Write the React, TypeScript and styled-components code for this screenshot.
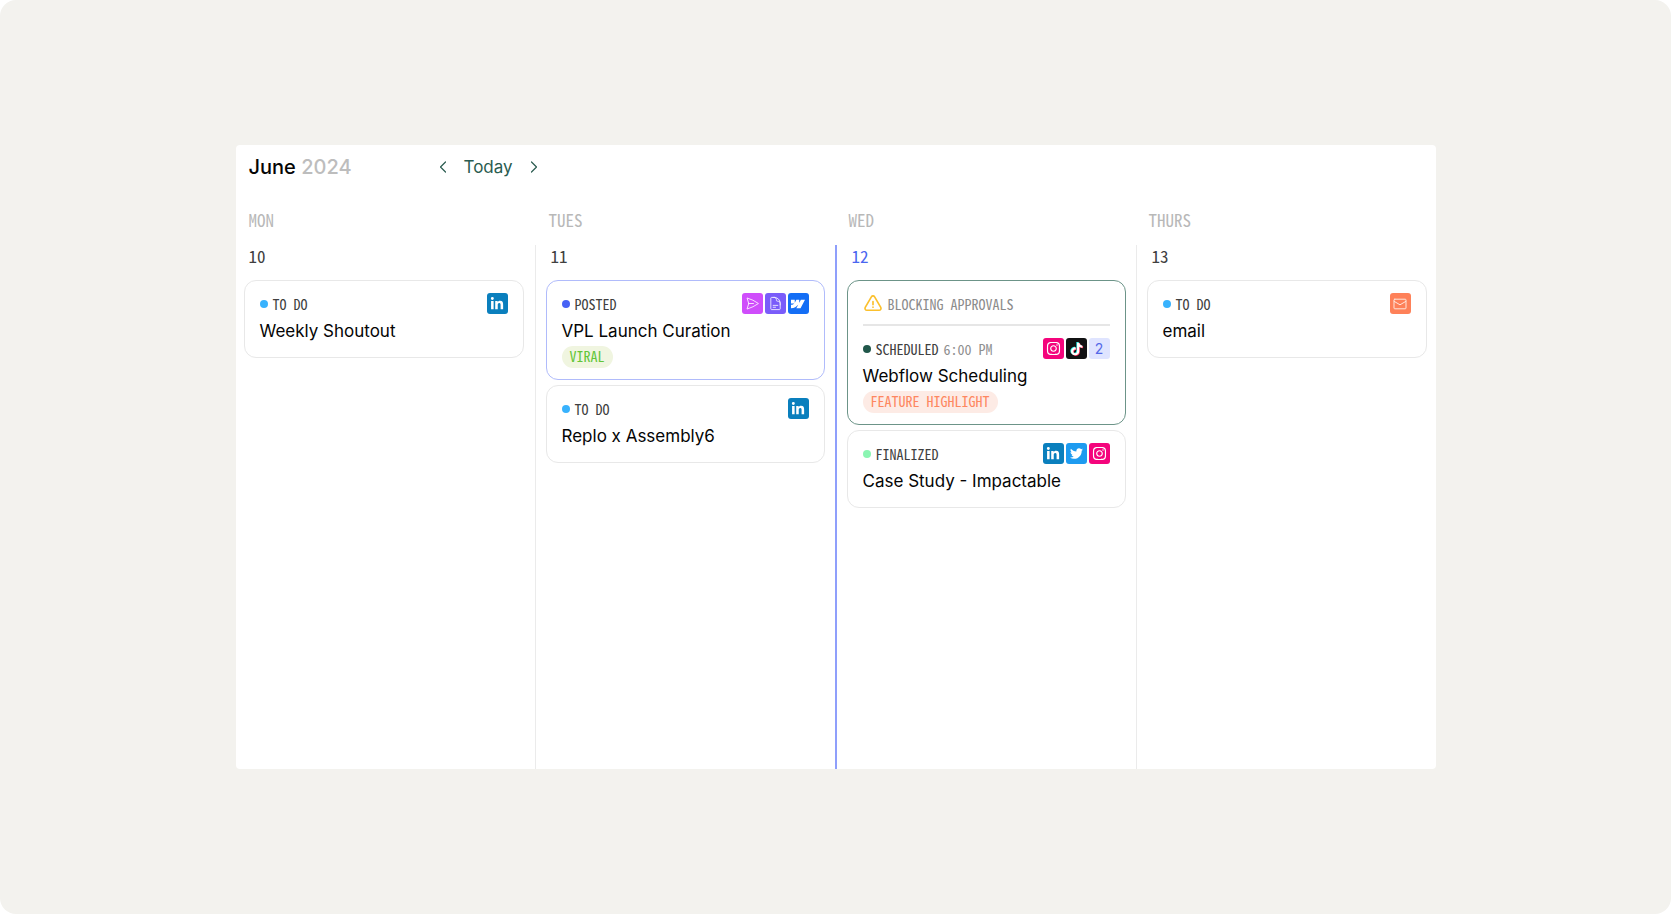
import React from "react";
import styled, { createGlobalStyle, css } from "styled-components";
import { FaLinkedinIn, FaTwitter, FaInstagram, FaTiktok } from "react-icons/fa6";
import { SiWebflow } from "react-icons/si";
import {
  HiOutlinePaperAirplane,
  HiOutlineDocumentText,
  HiOutlineExclamationTriangle,
} from "react-icons/hi2";

const sans = `Inter, "Liberation Sans", sans-serif`;
const mono = `"Noto Sans Mono CJK SC", "Liberation Mono", monospace`;

const GlobalStyle = createGlobalStyle`
  *, *::before, *::after { box-sizing: border-box; }
  body { margin: 0; background: #fff; font-family: ${sans}; color: #050505; }
  h1, h2, h3, p, ul { margin: 0; padding: 0; font-weight: 400; }
  ul { list-style: none; }
`;

const Page = styled.main`
  display: flex;
  align-items: center;
  justify-content: center;
  min-height: 100vh;
  padding: 24px;
  border-radius: 16px;
  background: #f3f2ee;
`;

const Calendar = styled.section`
  display: flex;
  flex-direction: column;
  width: 100%;
  max-width: 1200px;
  min-height: 624px;
  border-radius: 4px;
  background: #fff;
  overflow: hidden;
`;

const Toolbar = styled.header`
  display: flex;
  align-items: center;
  height: 44px;
  padding-left: 13px;
`;

const Month = styled.h1`
  width: 184px;
  font-size: 20px;
  font-weight: 500;
  line-height: 28px;
`;

const Year = styled.span`
  color: #bdbdbd;
`;

const Pager = styled.nav`
  display: flex;
  align-items: center;
  gap: 11px;
`;

const NavButton = styled.button`
  display: flex;
  align-items: center;
  justify-content: center;
  min-width: 20px;
  height: 28px;
  padding: 0;
  border: 0;
  background: none;
  color: #2a5c50;
  font-family: ${sans};
  font-size: 17px;
  cursor: pointer;
`;

const DayNames = styled.div`
  display: grid;
  grid-template-columns: repeat(4, 1fr);
  height: 56px;
  padding-top: 19px;
`;

const DayName = styled.span`
  padding-left: 13px;
  color: #b8b8b8;
  font-family: ${mono};
  font-size: 17px;
  line-height: 24px;
`;

const Days = styled.div`
  display: grid;
  flex: 1;
  grid-template-columns: 299fr 300fr 301fr 300fr;
`;

const DayColumn = styled.section<{ $first?: boolean; $today?: boolean }>`
  padding: 0 10px;
  ${(p) =>
    p.$first
      ? css`
          padding: 0 11px 0 8px;
        `
      : css`
          border-left: ${p.$today ? "2px solid #8f9ffb" : "1px solid #ebebeb"};
        `}

  &:last-child {
    padding-right: 9px;
  }
`;

const DateNumber = styled.h2<{ $today?: boolean }>`
  height: 35px;
  padding-left: 5px;
  color: ${(p) => (p.$today ? "#4a66f0" : "#404040")};
  font-family: ${mono};
  font-size: 17px;
  line-height: 22px;
`;

const Posts = styled.ul`
  display: flex;
  flex-direction: column;
  gap: 5px;
`;

const Card = styled.li<{ $border: string }>`
  min-height: 78px;
  padding: 12px 15px 11px;
  border: 1px solid ${(p) => p.$border};
  border-radius: 12px;
`;

const Warning = styled.p`
  display: flex;
  align-items: center;
  gap: 5px;
  height: 33px;
  margin-bottom: 12px;
  padding-bottom: 10px;
  border-bottom: 2px solid #e6e6e6;
  color: #8c8c8c;
  font-family: ${mono};
  font-size: 14px;
  line-height: 20px;

  svg {
    color: #fbc02d;
    stroke-width: 2;
  }
`;

const StatusRow = styled.div`
  display: flex;
  align-items: center;
  justify-content: space-between;
  height: 21px;
`;

const Status = styled.p`
  display: flex;
  align-items: center;
  gap: 5px;
  color: #404040;
  font-family: ${mono};
  font-size: 14px;
  line-height: 20px;
`;

const Dot = styled.span<{ $color: string }>`
  width: 8px;
  height: 8px;
  border-radius: 50%;
  background: ${(p) => p.$color};
`;

const Time = styled.time`
  color: #8f8f8f;
`;

const Channels = styled.div`
  display: flex;
  gap: 2px;
`;

const Badge = styled.span<{ $bg: string; $fg?: string }>`
  display: flex;
  align-items: center;
  justify-content: center;
  width: 21px;
  height: 21px;
  border-radius: 3px;
  background: ${(p) => p.$bg};
  color: ${(p) => p.$fg ?? "#fff"};
  font-size: 14px;
`;

const PostTitle = styled.h3`
  margin-top: 4px;
  font-size: 17px;
  line-height: 26px;
`;

const Tag = styled.span<{ $bg: string; $fg: string }>`
  display: block;
  width: fit-content;
  height: 22px;
  margin-top: 2px;
  padding: 0 8px;
  border-radius: 11px;
  background: ${(p) => p.$bg};
  color: ${(p) => p.$fg};
  font-family: ${mono};
  font-size: 14px;
  line-height: 20px;
`;

const Chevron = ({ d }: { d: string }) => (
  <svg width="8" height="12" viewBox="0 0 8 12" fill="none" stroke="currentColor" strokeWidth="1.2" strokeLinecap="round" strokeLinejoin="round" aria-hidden="true">
    <path d={d} />
  </svg>
);

const MailIcon = () => (
  <svg width="14" height="12" viewBox="0 0 14 12" fill="none" stroke="currentColor" strokeLinejoin="round" strokeLinecap="round">
    <rect x="1" y="1.2" width="12" height="9.6" rx="0.8" />
    <path d="M1.2 3.4 7 6.8l5.8-3.4" />
  </svg>
);

const TiktokIcon = () => (
  <svg width="15" height="15" viewBox="0 0 15 15">
    <FaTiktok x="0.5" y="1" size={13} color="#25f4ee" />
    <FaTiktok x="1.900" y="2" size={13} color="#fe2c55" />
    <FaTiktok x="1.200" y="1.500" size={13} color="#fff" />
  </svg>
);

type Channel = "linkedin" | "twitter" | "instagram" | "tiktok" | "webflow" | "send" | "doc" | "email" | "more";

const channels: Record<Channel, { bg: string; fg?: string; icon: React.ReactNode }> = {
  linkedin: { bg: "#0a7fbd", icon: <FaLinkedinIn size={14} /> },
  twitter: { bg: "#1d9bf0", icon: <FaTwitter size={13} /> },
  instagram: { bg: "#f4047c", icon: <FaInstagram size={15} /> },
  tiktok: { bg: "#111113", icon: <TiktokIcon /> },
  webflow: { bg: "#146ef5", icon: <SiWebflow size={14} /> },
  send: { bg: "#cf4dfb", fg: "#fbe6ff", icon: <HiOutlinePaperAirplane size={15} /> },
  doc: { bg: "#7a5cfa", fg: "#ece6ff", icon: <HiOutlineDocumentText size={15} /> },
  email: { bg: "#fe8159", fg: "#ffe6dc", icon: <MailIcon /> },
  more: { bg: "#dfe4ff", fg: "#5468e8", icon: "2" },
};

interface Post {
  status: "TO DO" | "POSTED" | "SCHEDULED" | "FINALIZED";
  title: string;
  channels: Channel[];
  time?: string;
  warning?: string;
  tag?: { label: string; bg: string; fg: string };
}

const statuses = {
  "TO DO": { dot: "#38b2fd", border: "#e8e8e8" },
  POSTED: { dot: "#4762f5", border: "#b0bbfb" },
  SCHEDULED: { dot: "#20574a", border: "#6c9488" },
  FINALIZED: { dot: "#8bf5b2", border: "#e8e8e8" },
};

const days: { name: string; date: string; today?: boolean; posts: Post[] }[] = [
  { name: "MON", date: "10", posts: [{ status: "TO DO", title: "Weekly Shoutout", channels: ["linkedin"] }] },
  {
    name: "TUES",
    date: "11",
    posts: [
      {
        status: "POSTED",
        title: "VPL Launch Curation",
        channels: ["send", "doc", "webflow"],
        tag: { label: "VIRAL", bg: "#f0f5e0", fg: "#62c638" },
      },
      { status: "TO DO", title: "Replo x Assembly6", channels: ["linkedin"] },
    ],
  },
  {
    name: "WED",
    date: "12",
    today: true,
    posts: [
      {
        status: "SCHEDULED",
        title: "Webflow Scheduling",
        channels: ["instagram", "tiktok", "more"],
        time: "6:00 PM",
        warning: "BLOCKING APPROVALS",
        tag: { label: "FEATURE HIGHLIGHT", bg: "#fdebe5", fg: "#fe8760" },
      },
      { status: "FINALIZED", title: "Case Study - Impactable", channels: ["linkedin", "twitter", "instagram"] },
    ],
  },
  { name: "THURS", date: "13", posts: [{ status: "TO DO", title: "email", channels: ["email"] }] },
];

const PostCard = ({ post }: { post: Post }) => (
  <Card $border={statuses[post.status].border}>
    {post.warning && (
      <Warning>
        <HiOutlineExclamationTriangle size={20} />
        {post.warning}
      </Warning>
    )}
    <StatusRow>
      <Status>
        <Dot $color={statuses[post.status].dot} />
        {post.status}
        {post.time && <Time>{post.time}</Time>}
      </Status>
      <Channels>
        {post.channels.map((c) => (
          <Badge key={c} $bg={channels[c].bg} $fg={channels[c].fg}>
            {channels[c].icon}
          </Badge>
        ))}
      </Channels>
    </StatusRow>
    <PostTitle>{post.title}</PostTitle>
    {post.tag && (
      <Tag $bg={post.tag.bg} $fg={post.tag.fg}>
        {post.tag.label}
      </Tag>
    )}
  </Card>
);

export default function App() {
  return (
    <>
      <GlobalStyle />
      <Page>
        <Calendar>
          <Toolbar>
            <Month>
              June <Year>2024</Year>
            </Month>
            <Pager>
              <NavButton aria-label="Previous">
                <Chevron d="M6.5 1 1.5 6l5 5" />
              </NavButton>
              <NavButton>Today</NavButton>
              <NavButton aria-label="Next">
                <Chevron d="M1.5 1l5 5-5 5" />
              </NavButton>
            </Pager>
          </Toolbar>
          <DayNames>
            {days.map((d) => (
              <DayName key={d.name}>{d.name}</DayName>
            ))}
          </DayNames>
          <Days>
            {days.map((d, i) => (
              <DayColumn key={d.date} $first={i === 0} $today={d.today}>
                <DateNumber $today={d.today}>{d.date}</DateNumber>
                <Posts>
                  {d.posts.map((p) => (
                    <PostCard key={p.title} post={p} />
                  ))}
                </Posts>
              </DayColumn>
            ))}
          </Days>
        </Calendar>
      </Page>
    </>
  );
}
